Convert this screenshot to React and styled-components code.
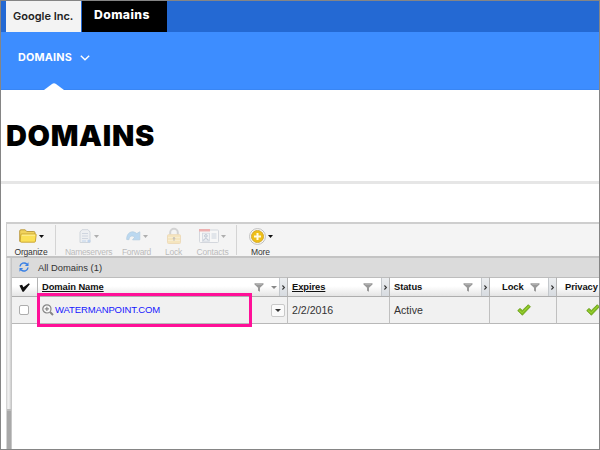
import React from 'react';
import styled, { createGlobalStyle } from 'styled-components';

const GlobalStyle = createGlobalStyle`
  *, *::before, *::after { box-sizing: border-box; }
  html, body { margin: 0; padding: 0; background: #fff; }
  body { font-family: "Liberation Sans", Arial, sans-serif; }
  svg { display: block; flex: none; overflow: visible; }
`;

const Page = styled.div`
  width: 600px;
  height: 450px;
  overflow: hidden;
  background: #fff;
  border: 1px solid #858585;
  display: flex;
  flex-direction: column;
`;

const TopBar = styled.nav`
  height: 31px;
  flex: none;
  padding-left: 5px;
  display: flex;
  background: #2469d3;
`;

const TopTab = styled.div`
  width: ${(p) => (p.$active ? 85 : 75)}px;
  margin-right: ${(p) => (p.$active ? 0 : 1)}px;
  padding-left: ${(p) => (p.$active ? 12 : 7)}px;
  line-height: ${(p) => (p.$active ? 28 : 30)}px;
  white-space: nowrap;
  font-family: Inter, sans-serif;
  font-size: ${(p) => (p.$active ? 12.2 : 11)}px;
  font-weight: ${(p) => (p.$active ? 800 : 600)};
  letter-spacing: ${(p) => (p.$active ? '0.4px' : '0')};
  color: ${(p) => (p.$active ? '#fff' : '#222')};
  background: ${(p) => (p.$active ? '#000' : '#f3f3f3')};
`;

const SubNav = styled.div`
  height: 58px;
  flex: none;
  padding-left: 17px;
  display: flex;
  flex-direction: column;
  justify-content: space-between;
  background: #3d8dff;
  border-bottom: 1px solid #3986f4;
`;

const SubNavLink = styled.div`
  height: 58px;
  display: flex;
  align-items: center;
  gap: 8px;
  color: #fff;
  font: 700 10.8px Inter, sans-serif;
  letter-spacing: 0.2px;
`;

const Notch = styled.svg`
  margin: 0 0 -1px 26px;
`;

const Title = styled.h1`
  height: 91px;
  flex: none;
  margin: 0;
  padding-left: 5px;
  line-height: 91px;
  font-family: Inter, sans-serif;
  font-size: 29px;
  font-weight: 900;
  letter-spacing: 0.65px;
  color: #000;
`;

const Rule = styled.div`
  height: 3px;
  flex: none;
  margin-bottom: 38px;
  background: #e6e6e6;
`;

const Panel = styled.section`
  flex: 1;
  margin-left: 5px;
  display: flex;
  flex-direction: column;
  border-top: 2px solid #cecece;
`;

const Toolbar = styled.div`
  height: 34px;
  flex: none;
  display: flex;
  align-items: flex-start;
  background: #f4f4f4;
  border-left: 1px solid #cfcfcf;
  border-bottom: 2px solid #c3c3c3;
`;

const ToolItem = styled.div`
  width: ${(p) => p.$w}px;
  flex: none;
  display: flex;
  flex-direction: column;
  align-items: center;
  opacity: ${(p) => (p.$dim ? 0.3 : 1)};
`;

const ToolGap = styled.div`
  width: 6px;
  flex: none;
`;

const ToolIcon = styled.div`
  height: 24px;
  display: flex;
  align-items: center;
  gap: 2px;
`;

const ToolLabel = styled.span`
  font-size: 8.5px;
  line-height: 8px;
  white-space: nowrap;
  letter-spacing: ${(p) => p.$ls ?? -0.2}px;
  color: #333;
`;

const ToolDivider = styled.div`
  width: 1px;
  height: 30px;
  margin-top: 1px;
  flex: none;
  background: #d4d4d4;
`;

const PanelBody = styled.div`
  flex: 1;
  display: flex;
`;

const Gutter = styled.div`
  width: 6px;
  display: flex;
  flex-direction: column;
  border-left: 1px solid #d5d5d5;
  border-right: 1px solid #c6c6c6;
`;

const GutterTrack = styled.div`
  height: 153px;
  background: linear-gradient(90deg, #e2e2e2, #f2f2f2 45%, #cccccc);
  border-bottom: 2px solid #bcbcbc;
`;

const GutterRest = styled.div`
  flex: 1;
  background: #a9a9a9;
`;

const Content = styled.div`
  position: relative;
  flex: 1;
  min-width: 0;
`;

const ListBar = styled.div`
  height: 19px;
  padding: 0 0 1px 7px;
  display: flex;
  align-items: center;
  gap: 9px;
  background: #dbdbdb;
  color: #333;
  font-size: 9.4px;
`;

const Grid = styled.div`
  display: grid;
  grid-template-columns: 26px 250px 102px 100px 67px 80px;
  width: 625px;
`;

const HeadCell = styled.div`
  height: 20px;
  min-width: 0;
  padding-left: ${(p) => p.$pad ?? 4}px;
  display: flex;
  align-items: center;
  border-top: 1px solid #bdbdbd;
  border-bottom: 1px solid #aeaeae;
  border-right: 1px solid #b4b4b4;
  background: linear-gradient(#fff 0%, #fff 45%, #e5e5e5 100%);
`;

const HeadText = styled.span`
  flex: 1;
  font-size: 9.4px;
  line-height: 17px;
  padding-bottom: 1px;
  font-weight: 700;
  white-space: nowrap;
  color: #111;
  letter-spacing: -0.08px;
  text-decoration: ${(p) => (p.$sortable ? 'underline' : 'none')};
  text-underline-offset: 1px;
`;

const HeadTools = styled.div`
  display: flex;
  align-items: center;
  gap: 7px;
  margin-right: ${(p) => p.$gap}px;
`;

const Resize = styled.div`
  width: 8px;
  height: 18px;
  flex: none;
  display: flex;
  align-items: center;
  justify-content: center;
  background: linear-gradient(#eceef0, #d7dbe0);
  border-left: 1px solid #c4c8cc;
`;

const Cell = styled.div`
  height: 27px;
  min-width: 0;
  padding: 0 2px 0 ${(p) => p.$pad ?? 4}px;
  display: flex;
  align-items: center;
  background: #f1f1f1;
  border-right: 1px solid #c0c0c0;
  border-bottom: 1px solid #b8b8b8;
  color: #333;
  font-size: 10.6px;
`;

const CheckSquare = styled.span`
  width: 10px;
  height: 10px;
  background: #fff;
  border: 1px solid #adadad;
  border-radius: 2px;
`;

const DomainLink = styled.span`
  flex: 1;
  padding: 0 0 1px 1px;
  color: #1616ff;
  font-size: 9.5px;
  letter-spacing: -0.12px;
`;

const MenuButton = styled.span`
  width: 14px;
  height: 13px;
  display: flex;
  align-items: center;
  justify-content: center;
  background: #fafafa;
  border: 1px solid #c9c9c9;
  border-radius: 2px;
`;

const Highlight = styled.div`
  position: absolute;
  left: 25px;
  top: 35px;
  width: 215px;
  height: 34px;
  border: 3px solid #ff1098;
`;

const Caret = ({ color = '#111', w = 5 }) => (
  <svg width={w} height="3" viewBox="0 0 6 3" preserveAspectRatio="none">
    <path d="M0 0H6L3 3Z" fill={color} />
  </svg>
);

const Folder = () => (
  <svg width="18" height="14" viewBox="0 0 18 14">
    <path d="M.7 12.3V2Q.7 .8 2 .8H6.2L7.7 2.5H14.8Q16 2.5 16 3.7V12.3Z" fill="#f1d35c" stroke="#b8963a" strokeWidth=".9" />
    <path d="M2.3 13.2Q1.2 13.2 1.2 12L1.8 5.8Q1.9 5 2.7 5H16.4Q17.3 5 17.2 5.8L16.4 12.3Q16.3 13.2 15.3 13.2Z" fill="#fbe056" stroke="#c7a130" strokeWidth=".9" />
    <path d="M2.8 6.2H16" stroke="#fff0a0" />
  </svg>
);

const Server = () => (
  <svg width="13" height="15" viewBox="0 0 13 15">
    <path d="M1 3L3 .7H9L11 3V13.5H1Z" fill="#dfe6f0" stroke="#8092a8" />
    <path d="M3 4.5H9M3 7H9M3 9.5H9" stroke="#7c90b0" />
    <path d="M3 12H7" stroke="#4b8de0" />
    <circle cx="10" cy="12" r="1.6" fill="#4b8de0" />
  </svg>
);

const ForwardArrow = () => (
  <svg width="15" height="10" viewBox="0 0 15 10">
    <path d="M.7 8.5C.5 1.8 6-1.4 10.8 2.6L13.8 .8V8.8H6.6L8.7 6.2C6 3.8 3.4 5 2.9 8.7Z" fill="#3b9bea" stroke="#2378ba" strokeWidth=".8" />
  </svg>
);

const Padlock = () => (
  <svg width="14" height="16" viewBox="0 0 14 16">
    <path d="M3.2 8V4.6A3.8 3.8 0 0 1 10.8 4.6V8" fill="none" stroke="#8a8a8a" strokeWidth="2" />
    <rect x=".5" y="6.7" width="13" height="8.8" rx="1" fill="#f9c445" stroke="#e0a43a" />
    <path d="M1 9.5H13M1 12.5H13" stroke="#ffdf87" />
    <circle cx="7" cy="10.3" r="1.2" fill="#6b5530" />
    <path d="M7 10V13" stroke="#6b5530" />
  </svg>
);

const ContactCard = () => (
  <svg width="20" height="14" viewBox="0 0 20 14">
    <rect x=".5" y="1" width="19" height="12.5" rx="1" fill="#fff" stroke="#8b98aa" />
    <path d="M0 0H11V2.5H0Z" fill="#e01818" />
    <rect x="3.4" y="4.2" width="7" height="8" fill="#e7eef7" stroke="#7f95b3" strokeWidth=".8" />
    <circle cx="6.9" cy="6.9" r="1.3" fill="none" stroke="#3a5580" />
    <path d="M4.7 11.7V10.6Q6.9 8.4 9.1 10.6V11.7" fill="none" stroke="#3a5580" />
    <path d="M12.5 5H17.5M12.5 7H17.5M12.5 9H17.5" stroke="#6e89ad" />
  </svg>
);

const PlusCircle = () => (
  <svg width="17" height="17" viewBox="0 0 17 17">
    <circle cx="8.5" cy="8.5" r="7.9" fill="#fff" stroke="#bcbcbc" />
    <circle cx="8.5" cy="8.5" r="6.1" fill="#efbf18" stroke="#c9a02a" strokeWidth=".8" />
    <path d="M8.5 5V12M5 8.5H12" stroke="#fffbe2" strokeWidth="2" />
  </svg>
);

const Refresh = () => (
  <svg width="10" height="10" viewBox="0 0 10 10">
    <path d="M1 4.5A4 4 0 0 1 7.8 2.1M9 5.5A4 4 0 0 1 2.2 7.9" fill="none" stroke="#3980e5" strokeWidth="1.5" />
    <path d="M9.5 .2V4H5.9ZM.5 9.8V6H4.1Z" fill="#3980e5" />
  </svg>
);

const Funnel = () => (
  <svg width="10" height="9" viewBox="0 0 10 9">
    <path d="M.5 .3H9.5V1.5L6 4.7V8.8L4 7.8V4.7L.5 1.5Z" fill="#999" />
    <path d="M2.2 1.2H7.8" stroke="#c7c7c7" strokeWidth=".7" />
  </svg>
);

const HeaderCheck = () => (
  <svg width="11" height="9" viewBox="0 0 11 9">
    <path d="M.4 2.5L3.1 1.8 4.4 4.3 9.8 .2 10.8 1.3 4.7 8.7H3.5Z" fill="#111" />
  </svg>
);

const GreenCheck = () => (
  <svg width="14" height="12" viewBox="0 0 14 12">
    <path d="M.7 6.6L3 4.4 5.3 6.4 11.3 .7 13.4 2.8 5.4 11.2Z" fill="#83bd21" stroke="#639b14" strokeWidth=".8" />
    <path d="M2 6.5L5.2 8.8 11.8 2.1" fill="none" stroke="#a2d53c" strokeWidth=".8" />
  </svg>
);

const Magnifier = () => (
  <svg width="12" height="12" viewBox="0 0 12 12">
    <circle cx="4.9" cy="4.9" r="4.1" fill="#f7f7f7" stroke="#858585" strokeWidth="1.2" />
    <path d="M4.9 2.8V7M2.8 4.9H7" stroke="#777" />
    <path d="M8 8L11 11" stroke="#858585" strokeWidth="2" />
  </svg>
);

const Grip = () => (
  <Resize>
    <svg width="3" height="5" viewBox="0 0 3 5">
      <path d="M.4 .5L2.4 2.5 .4 4.5" fill="none" stroke="#333" strokeWidth="1.1" />
    </svg>
  </Resize>
);

const Tool = ({ w, label, dim, caret = true, ls, children }) => (
  <ToolItem $w={w} $dim={dim}>
    <ToolIcon>
      {children}
      {caret && <Caret />}
    </ToolIcon>
    <ToolLabel $ls={ls}>{label}</ToolLabel>
  </ToolItem>
);

export default function App() {
  return (
    <>
      <GlobalStyle />
      <Page>
        <TopBar>
          <TopTab>Google Inc.</TopTab>
          <TopTab $active>Domains</TopTab>
        </TopBar>
        <SubNav>
          <SubNavLink>
            DOMAINS
            <svg width="10" height="6" viewBox="0 0 10 6">
              <path d="M.8 .8L5 4.8 9.2 .8" fill="none" stroke="#fff" strokeWidth="1.4" />
            </svg>
          </SubNavLink>
          <Notch width="20" height="7" viewBox="0 0 20 7">
            <path d="M0 7L8 1Q10 -.5 12 1L20 7Z" fill="#fff" />
          </Notch>
        </SubNav>
        <Title>DOMAINS</Title>
        <Rule />
        <Panel>
          <Toolbar>
            <Tool w={48} label="Organize"><Folder /></Tool>
            <ToolDivider />
            <Tool w={65} label="Nameservers" dim ls={-0.3}><Server /></Tool>
            <Tool w={31} label="Forward" dim ls={-0.3}><ForwardArrow /></Tool>
            <Tool w={43} label="Lock" dim caret={false}><Padlock /></Tool>
            <Tool w={35} label="Contacts" dim><ContactCard /></Tool>
            <ToolGap />
            <ToolDivider />
            <Tool w={47} label="More" ls={-0.1}><PlusCircle /></Tool>
          </Toolbar>
          <PanelBody>
            <Gutter>
              <GutterTrack />
              <GutterRest />
            </Gutter>
            <Content>
              <ListBar><Refresh />All Domains (1)</ListBar>
              <Grid>
                <HeadCell $pad={7}><HeaderCheck /></HeadCell>
                <HeadCell>
                  <HeadText $sortable>Domain Name</HeadText>
                  <HeadTools $gap={2}><Funnel /><Caret color="#888" w={6} /></HeadTools>
                  <Grip />
                </HeadCell>
                <HeadCell>
                  <HeadText $sortable>Expires</HeadText>
                  <HeadTools $gap={8}><Funnel /></HeadTools>
                  <Grip />
                </HeadCell>
                <HeadCell>
                  <HeadText>Status</HeadText>
                  <HeadTools $gap={8}><Funnel /></HeadTools>
                  <Grip />
                </HeadCell>
                <HeadCell $pad={12}>
                  <HeadText>Lock</HeadText>
                  <HeadTools $gap={8}><Funnel /></HeadTools>
                  <Grip />
                </HeadCell>
                <HeadCell $pad={8}><HeadText>Privacy</HeadText></HeadCell>
                <Cell $pad={7}><CheckSquare /></Cell>
                <Cell>
                  <Magnifier />
                  <DomainLink>WATERMANPOINT.COM</DomainLink>
                  <MenuButton><Caret color="#333" w={6} /></MenuButton>
                </Cell>
                <Cell>2/2/2016</Cell>
                <Cell>Active</Cell>
                <Cell $pad={27}><GreenCheck /></Cell>
                <Cell $pad={29}><GreenCheck /></Cell>
              </Grid>
              <Highlight />
            </Content>
          </PanelBody>
        </Panel>
      </Page>
    </>
  );
}
